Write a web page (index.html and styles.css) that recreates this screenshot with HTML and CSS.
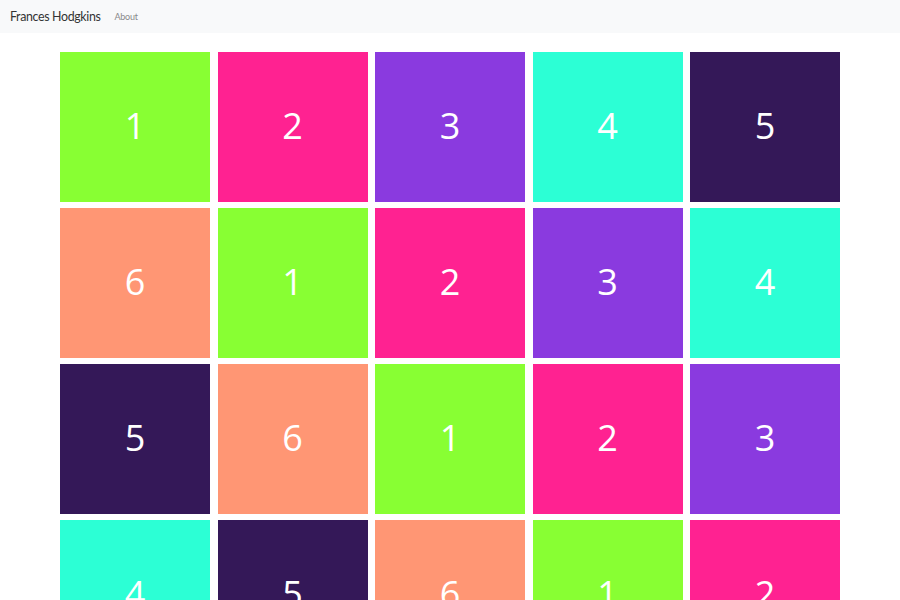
FILE: index.html
```html
<!DOCTYPE html>
<html>
<head>
<meta charset="utf-8">
<link rel="stylesheet" href="styles.css">
</head>
<body>
<nav class="navbar">
  <span class="brand">Frances Hodgkins</span>
  <a class="nav-link" href="#">About</a>
</nav>
<main class="grid">
  <div class="tile c1">1</div>
  <div class="tile c2">2</div>
  <div class="tile c3">3</div>
  <div class="tile c4">4</div>
  <div class="tile c5">5</div>
  <div class="tile c6">6</div>
  <div class="tile c1">1</div>
  <div class="tile c2">2</div>
  <div class="tile c3">3</div>
  <div class="tile c4">4</div>
  <div class="tile c5">5</div>
  <div class="tile c6">6</div>
  <div class="tile c1">1</div>
  <div class="tile c2">2</div>
  <div class="tile c3">3</div>
  <div class="tile c4">4</div>
  <div class="tile c5">5</div>
  <div class="tile c6">6</div>
  <div class="tile c1">1</div>
  <div class="tile c2">2</div>
</main>
</body>
</html>
```
FILE: styles.css
```css
html, body {
  margin: 0;
  padding: 0;
  background: #ffffff;
}
body {
  font-family: Lato, "Liberation Sans", sans-serif;
}
.navbar {
  height: 33px;
  background: #f8f9fa;
  display: flex;
  align-items: center;
  padding: 0 10px;
  gap: 14px;
}
.brand {
  font-size: 12.4px;
  letter-spacing: -0.35px;
  color: #333333;
}
.nav-link {
  font-size: 9px;
  letter-spacing: -0.25px;
  color: #8a8a8a;
  text-decoration: none;
}
.grid {
  display: flex;
  flex-wrap: wrap;
  column-gap: 7.5px;
  row-gap: 6px;
  width: 780px;
  margin: 19px auto 0;
}
.tile {
  width: 150px;
  height: 150px;
  box-sizing: border-box;
  padding-bottom: 4px;
  display: flex;
  align-items: center;
  justify-content: center;
  color: #ffffff;
  font-family: "Open Sans", "Noto Sans", sans-serif;
  font-size: 36px;
}
.c1 { background: #88ff33; }
.c2 { background: #ff2291; }
.c3 { background: #8a3adf; }
.c4 { background: #2cffd5; }
.c5 { background: #341858; }
.c6 { background: #ff9674; }
```
